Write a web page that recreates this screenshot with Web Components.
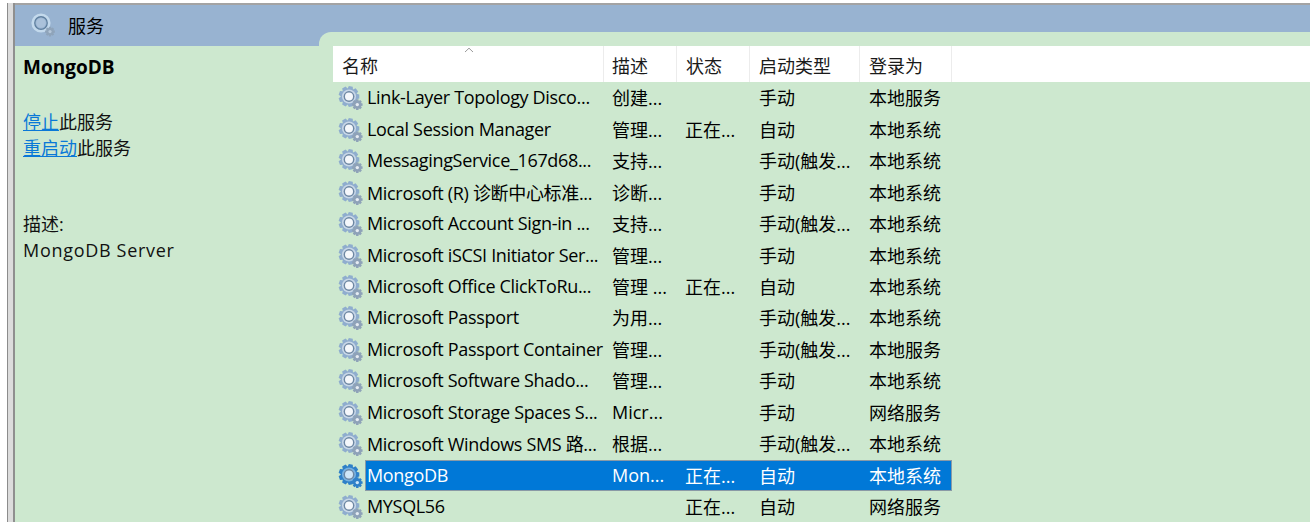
<!DOCTYPE html>
<html>
<head>
<meta charset="utf-8">
<style>
  html, body { margin: 0; height: 522px; overflow: hidden; background: #fff; }
  body { font-family: "Open Sans", "Noto Sans CJK SC", sans-serif; }
</style>
</head>
<body>
<services-window>
  <services-sidebar slot="side" name="MongoDB" desc="MongoDB Server"></services-sidebar>
  <services-list slot="list"></services-list>
</services-window>

<script>
const FONT = `"Open Sans", "Noto Sans CJK SC", sans-serif`;

// gear outline, teeth as a trapezoid wave round a circle
function gearPath(cx, cy, rOut, rIn, teeth) {
  let d = '';
  const step = Math.PI * 2 / teeth;
  for (let i = 0; i < teeth; i++) {
    const a = i * step;
    const pts = [
      [rIn, a - step * 0.5], [rOut, a - step * 0.27],
      [rOut, a + step * 0.27], [rIn, a + step * 0.5]
    ];
    pts.forEach(([r, t], j) => {
      const x = (cx + r * Math.cos(t)).toFixed(2);
      const y = (cy + r * Math.sin(t)).toFixed(2);
      d += (i === 0 && j === 0 ? 'M' : 'L') + x + ' ' + y;
    });
  }
  return d + 'Z';
}

class GearIcon extends HTMLElement {
  connectedCallback() {
    const sel = this.hasAttribute('selected');
    const big = sel ? '#2f80c8' : '#8fadce';
    const hi = sel ? '#a9d2f2' : '#eef3f9';
    const small = sel ? '#2f80c8' : '#8ea2b8';
    this.attachShadow({ mode: 'open' }).innerHTML = `
      <style>
        :host { display: block; width: 26px; height: 26px; flex: none; }
        svg { display: block; }
      </style>
      <svg width="26" height="26" viewBox="0 0 26 26">
        <path d="${gearPath(11, 11.5, 10.5, 8, 9)}" fill="${big}"/>
        <circle cx="11" cy="11.5" r="7" fill="${hi}" opacity=".6"/>
        <circle cx="11" cy="11.5" r="5.4" fill="#6d87a3"/>
        <circle cx="11" cy="11.5" r="4" fill="${sel ? '#cfe6f8' : '#f4f7fb'}"/>
        <path d="${gearPath(19.3, 19.6, 5.4, 3.9, 8)}" fill="${small}"/>
        <circle cx="19.3" cy="19.6" r="1.7" fill="${sel ? '#cfe6f8' : '#e6ecf2'}"/>
      </svg>`;
  }
}

class ServicesWindow extends HTMLElement {
  constructor() {
    super();
    this.attachShadow({ mode: 'open' }).innerHTML = `
      <style>
        :host { display: flex; width: 1310px; height: 522px; overflow: hidden; font-family: ${FONT}; color: #000; }
        .gutter { width: 7px; background: #fff; flex: none; }
        .edge { width: 8px; flex: none; box-sizing: border-box; background: #dcdcdc;
          border-left: 1px solid #8c8c8c; border-right: 2px solid #8f8f8f; margin-top: 3px; }
        .main { flex: 1; min-width: 0; display: flex; flex-direction: column; background: #fff; padding-top: 3px; }
        .topline { height: 2px; background: #a3a3a3; flex: none; }
        .title { height: 41px; flex: none; background: #98b3d1; display: flex; align-items: center;
          padding-left: 15px; gap: 12px; font-size: 18px; box-sizing: border-box; padding-bottom: 1px; }
        .body { flex: 1; min-height: 0; display: flex; background: #cde8cf; position: relative; }
        .tab { position: absolute; left: 304px; top: -14px; right: 0; height: 16px; background: #cde8cf;
          border-top-left-radius: 12px; }
        ::slotted([slot=side]) { width: 318px; flex: none; }
        ::slotted([slot=list]) { flex: 1; min-width: 0; position: relative; }
        svg { display: block; }
      </style>
      <div class="gutter"></div>
      <div class="edge"></div>
      <div class="main">
        <div class="topline"></div>
        <div class="title">
          <svg width="26" height="26" viewBox="0 0 26 26">
            <circle cx="11" cy="11" r="7.6" fill="none" stroke="#c3d9ec" stroke-width="4"/>
            <circle cx="11" cy="11" r="6.2" fill="none" stroke="#5f7f9f" stroke-width="1.4"/>
            <circle cx="11" cy="11" r="4.8" fill="#aac1da"/>
            <path d="${gearPath(20, 19.6, 5, 3.5, 8)}" fill="#8fa4ba"/>
            <circle cx="20" cy="19.6" r="1.6" fill="#b4c6d9"/>
          </svg>
          <span>服务</span>
        </div>
        <div class="body">
          <div class="tab"></div>
          <slot name="side"></slot>
          <slot name="list"></slot>
        </div>
      </div>`;
  }
}

class ServicesSidebar extends HTMLElement {
  connectedCallback() {
    this.attachShadow({ mode: 'open' }).innerHTML = `
      <style>
        :host { display: block; box-sizing: border-box; padding: 9px 0 0 8px; font-size: 18px; color: #111; }
        h2 { margin: 0 0 30px; font-size: 19px; line-height: 24px; font-weight: 700; color: #000; }
        p { margin: 0; line-height: 26px; }
        a { color: #0a78d7; text-decoration: underline; }
        .desc { margin-top: 50px; }
        .latin { letter-spacing: .7px; }
      </style>
      <h2>${this.getAttribute('name')}</h2>
      <p><a href="#">停止</a>此服务</p>
      <p><a href="#">重启动</a>此服务</p>
      <div class="desc">
        <p>描述:</p>
        <p class="latin">${this.getAttribute('desc')}</p>
      </div>`;
  }
}

const COLS = '271px 73px 73px 110px 92px';

const SERVICES = [
  ['Link-Layer Topology Disco...', '创建...', '', '手动', '本地服务'],
  ['Local Session Manager', '管理...', '正在...', '自动', '本地系统'],
  ['MessagingService_167d68...', '支持...', '', '手动(触发...', '本地系统'],
  ['Microsoft (R) 诊断中心标准...', '诊断...', '', '手动', '本地系统'],
  ['Microsoft Account Sign-in ...', '支持...', '', '手动(触发...', '本地系统'],
  ['Microsoft iSCSI Initiator Ser...', '管理...', '', '手动', '本地系统'],
  ['Microsoft Office ClickToRu...', '管理 ...', '正在...', '自动', '本地系统'],
  ['Microsoft Passport', '为用...', '', '手动(触发...', '本地系统'],
  ['Microsoft Passport Container', '管理...', '', '手动(触发...', '本地服务'],
  ['Microsoft Software Shado...', '管理...', '', '手动', '本地系统'],
  ['Microsoft Storage Spaces S...', 'Micr...', '', '手动', '网络服务'],
  ['Microsoft Windows SMS 路...', '根据...', '', '手动(触发...', '本地系统'],
  ['MongoDB', 'Mon...', '正在...', '自动', '本地系统', true],
  ['MYSQL56', '', '正在...', '自动', '网络服务'],
];

class ServiceRow extends HTMLElement {
  set data(r) {
    const sel = r[5];
    this.attachShadow({ mode: 'open' }).innerHTML = `
      <style>
        :host { display: grid; grid-template-columns: ${COLS}; height: 31.46px; font-size: 18px; color: #000; white-space: nowrap; }
        .cell { display: flex; align-items: center; padding: 0 0 2px 9px; overflow: hidden; }
        .tight { padding-left: 8px; }
        .name { padding: 0 0 0 5px; gap: 3px; overflow: visible; }
        .label { flex: 1; align-self: stretch; display: flex; align-items: center; padding: 0 0 2px 2px; margin-left: -2px;
          box-sizing: border-box; letter-spacing: -.33px; }
        :host([selected]) { color: #fff; }
        :host([selected]) .cell:not(.name), :host([selected]) .label { background: #0078d7; box-shadow: inset 0 1px #8a9aa6, inset 0 -1px #8a9aa6; }
        :host([selected]) .label { box-shadow: inset 1px 1px #8a9aa6, inset 0 -1px #8a9aa6; }
        :host([selected]) .cell:last-child { box-shadow: inset 0 1px #8a9aa6, inset 0 -1px #8a9aa6, inset -1px 0 #8a9aa6; }
      </style>
      <div class="cell name"><gear-icon ${sel ? 'selected' : ''}></gear-icon><span class="label">${r[0]}</span></div>
      <div class="cell tight">${r[1]}</div>
      <div class="cell tight">${r[2]}</div>
      <div class="cell">${r[3]}</div>
      <div class="cell">${r[4]}</div>`;
  }
}

class ServicesList extends HTMLElement {
  connectedCallback() {
    const heads = ['名称', '描述', '状态', '启动类型', '登录为'];
    this.attachShadow({ mode: 'open' }).innerHTML = `
      <style>
        :host { display: block; }
        .head { height: 36px; background: #fff; display: grid; grid-template-columns: ${COLS} 1fr;
          font-size: 18px; color: #1a1a1a; position: relative; }
        .head div { display: flex; align-items: center; padding: 1px 0 0 9px; border-right: 1px solid #ececec; box-sizing: border-box; }
        .head div:nth-child(2) { padding-left: 8px; }
        .head div:last-of-type { border: 0; }
        .sort { position: absolute; left: 131px; top: 1px; }
        .rows { display: block; margin-top: .6px; }
      </style>
      <div class="head">
        ${heads.map(h => `<div>${h}</div>`).join('')}<div></div>
        <svg class="sort" width="10" height="6" viewBox="0 0 10 6"><path d="M1 5 5 1.2 9 5" fill="none" stroke="#9a9a9a" stroke-width="1"/></svg>
      </div>
      <div class="rows"></div>`;
    const rows = this.shadowRoot.querySelector('.rows');
    SERVICES.forEach(r => {
      const row = document.createElement('service-row');
      if (r[5]) row.setAttribute('selected', '');
      row.data = r;
      rows.appendChild(row);
    });
  }
}

customElements.define('gear-icon', GearIcon);
customElements.define('services-sidebar', ServicesSidebar);
customElements.define('service-row', ServiceRow);
customElements.define('services-list', ServicesList);
customElements.define('services-window', ServicesWindow);
</script>
</body>
</html>
